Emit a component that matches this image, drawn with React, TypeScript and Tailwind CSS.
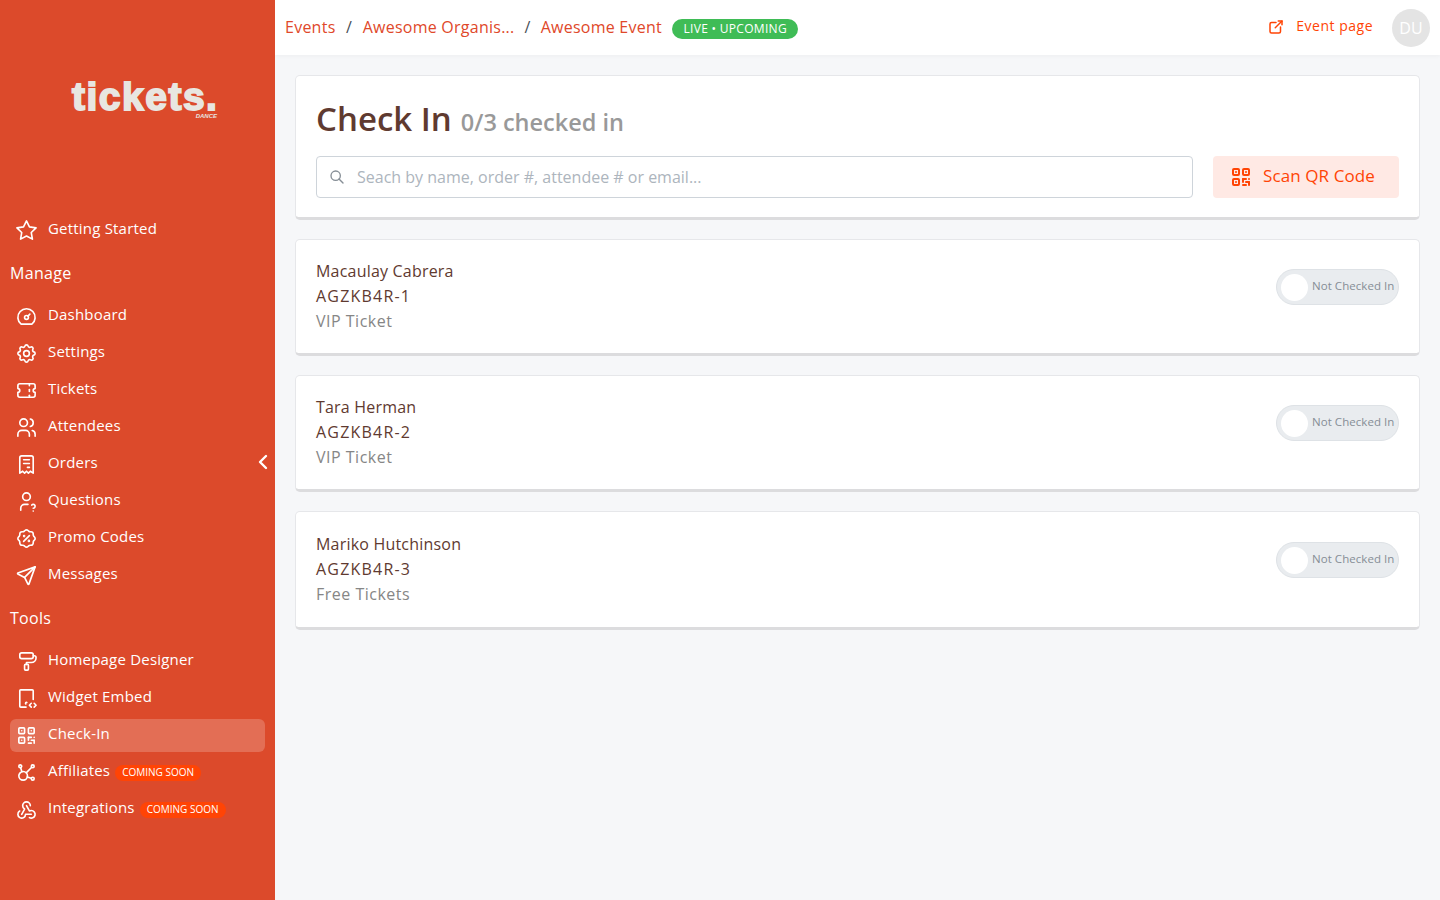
import type { ComponentType } from "react";
import {
  TbAffiliate,
  TbChevronLeft,
  TbDashboard,
  TbDeviceTabletCode,
  TbExternalLink,
  TbPaint,
  TbQrcode,
  TbReceipt,
  TbRosetteDiscount,
  TbSearch,
  TbSend,
  TbSettings,
  TbStar,
  TbTicket,
  TbUserQuestion,
  TbUsers,
  TbWebhook,
} from "react-icons/tb";

type NavItem = {
  label: string;
  icon: ComponentType<{ className?: string }>;
  active?: boolean;
  soon?: boolean;
};

const manageItems: NavItem[] = [
  { label: "Dashboard", icon: TbDashboard },
  { label: "Settings", icon: TbSettings },
  { label: "Tickets", icon: TbTicket },
  { label: "Attendees", icon: TbUsers },
  { label: "Orders", icon: TbReceipt },
  { label: "Questions", icon: TbUserQuestion },
  { label: "Promo Codes", icon: TbRosetteDiscount },
  { label: "Messages", icon: TbSend },
];

const toolItems: NavItem[] = [
  { label: "Homepage Designer", icon: TbPaint },
  { label: "Widget Embed", icon: TbDeviceTabletCode },
  { label: "Check-In", icon: TbQrcode, active: true },
  { label: "Affiliates", icon: TbAffiliate, soon: true },
  { label: "Integrations", icon: TbWebhook, soon: true },
];

const attendees = [
  { name: "Macaulay Cabrera", code: "AGZKB4R-1", ticket: "VIP Ticket", box: "h-[117px] pt-[19px]" },
  { name: "Tara Herman", code: "AGZKB4R-2", ticket: "VIP Ticket", box: "h-[117px] pt-[19px]" },
  { name: "Mariko Hutchinson", code: "AGZKB4R-3", ticket: "Free Tickets", box: "h-[119px] pt-[20px]" },
];

function SideLink({ item }: { item: NavItem }) {
  const Icon = item.icon;
  return (
    <div
      className={`flex h-[33px] items-center rounded-md pl-[5px] text-white ${
        item.active ? "bg-white/20" : ""
      }`}
    >
      <Icon className="h-[23px] w-[23px] shrink-0 [stroke-width:1.7]" />
      <span className="mb-[5px] ml-[10px] text-[15px] tracking-[0.2px] whitespace-nowrap">{item.label}</span>
      {item.soon && (
        <span className="ml-[5px] flex h-[16px] items-center rounded-full bg-[#ff4405] px-[7px] text-[10px] whitespace-nowrap">
          COMING SOON
        </span>
      )}
    </div>
  );
}

function SectionLabel({ text, height }: { text: string; height: string }) {
  return (
    <div className={`flex items-center text-[16px] tracking-[0.3px] text-white ${height}`}>
      <span className="mb-[1px]">{text}</span>
    </div>
  );
}

export default function App() {
  return (
    <div className="flex h-[900px] overflow-hidden bg-[#f6f7f9] font-['Open_Sans',sans-serif] text-[#5f3a30]">
      <aside className="relative flex w-[275px] shrink-0 flex-col bg-[#dc4a2b] px-[10px]">
        <div className="flex h-[214px] flex-col pt-[82px] pl-[62px]">
          <div className="w-[145px] font-['Liberation_Sans',sans-serif] text-[39px] leading-[30px] font-bold tracking-[1.5px] whitespace-nowrap text-[#e8e6e1] [-webkit-text-stroke:1.8px_#e8e6e1]">
            tickets.
          </div>
          <div className="mt-[1px] w-[145px] text-right font-['Liberation_Sans',sans-serif] text-[6px] leading-[6px] font-bold text-[#e8e6e1] italic">
            DANCE
          </div>
        </div>
        <SideLink item={{ label: "Getting Started", icon: TbStar }} />
        <SectionLabel text="Manage" height="h-[53px]" />
        <div className="flex flex-col gap-[4px]">
          {manageItems.map((item) => (
            <SideLink key={item.label} item={item} />
          ))}
        </div>
        <SectionLabel text="Tools" height="h-[53px]" />
        <div className="flex flex-col gap-[4px]">
          {toolItems.map((item) => (
            <SideLink key={item.label} item={item} />
          ))}
        </div>
        <TbChevronLeft className="absolute top-[450px] left-[251px] h-[24px] w-[24px] text-white [stroke-width:2.4]" />
      </aside>

      <div className="flex min-w-0 flex-1 flex-col">
        <header className="flex h-[55px] items-center justify-between bg-white pr-[10px] pl-[10px] shadow-[0_1px_4px_rgba(0,0,0,0.04)]">
          <div className="flex items-center text-[16px] tracking-[0.25px] text-[#e0482a]">
            <span className="mb-[2px]">Events</span>
            <span className="mx-[10.5px] mb-[2px] text-[#495057]">/</span>
            <span className="mb-[2px]">Awesome Organis...</span>
            <span className="mx-[10px] mb-[2px] text-[#495057]">/</span>
            <span className="mb-[2px]">Awesome Event</span>
            <span className="mt-[2px] ml-[10px] flex h-[20px] items-center rounded-full bg-[#3fbc56] px-[11.5px] text-[12px] tracking-[0.3px] text-white">
              LIVE • UPCOMING
            </span>
          </div>
          <div className="flex items-center">
            <TbExternalLink className="mb-[2px] h-[18px] w-[18px] text-[#ff4405]" />
            <span className="mr-[19px] mb-[4px] ml-[11px] text-[14px] tracking-[0.5px] text-[#ff4405]">Event page</span>
            <div className="flex h-[38px] w-[38px] items-center justify-center rounded-full bg-[#e4e4e4] text-[16px] text-white">
              DU
            </div>
          </div>
        </header>

        <main className="flex flex-col gap-[19px] p-[20px]">
          <section className="h-[145px] rounded-[5px] border border-b-[3px] border-[#e6e7ea] border-b-[#dcdcde] bg-white px-[20px] pt-[21px]">
            <div className="flex h-[44px] items-baseline gap-[9px]">
              <h1 className="text-[33px] leading-[44px] font-semibold text-[#5f3a30]">Check In</h1>
              <span className="text-[23.5px] font-semibold text-[#999999]">0/3 checked in</span>
            </div>
            <div className="mt-[15px] flex gap-[20px]">
              <div className="flex h-[42px] flex-1 items-center rounded-[4px] border border-[#ced4da] bg-white pl-[12px]">
                <TbSearch className="h-[16px] w-[16px] text-[#868e96]" />
                <span className="mb-[1px] ml-[12px] text-[16px] text-[#adb5bd]">
                  Seach by name, order #, attendee # or email...
                </span>
              </div>
              <button className="flex h-[42px] w-[186px] items-center gap-[10px] rounded-[4px] bg-[#ffe9e4] pl-[16px] text-[17px] tracking-[0.1px] text-[#ff4405]">
                <TbQrcode className="h-[24px] w-[24px]" />
                <span className="mb-[2px]">Scan QR Code</span>
              </button>
            </div>
          </section>

          {attendees.map((a) => (
            <section
              key={a.code}
              className={`flex items-start justify-between rounded-[5px] border border-b-[3px] border-[#e6e7ea] border-b-[#dcdcde] bg-white px-[20px] ${a.box}`}
            >
              <div className="flex flex-col text-[16px] leading-[24.5px]">
                <span className="tracking-[0.2px]">{a.name}</span>
                <span className="font-medium tracking-[1.2px]">{a.code}</span>
                <span className="mt-[1px] tracking-[0.5px] text-[#868686]">{a.ticket}</span>
              </div>
              <div className="mt-[10px] flex h-[36px] w-[123px] items-center rounded-full border border-[#dee2e6] bg-[#e9ecef] pl-[4px]">
                <div className="h-[27px] w-[27px] rounded-full bg-white" />
                <span className="mb-[2px] ml-[4px] text-[11.5px] tracking-[0.05px] whitespace-nowrap text-[#868e96]">Not Checked In</span>
              </div>
            </section>
          ))}
        </main>
      </div>
    </div>
  );
}
